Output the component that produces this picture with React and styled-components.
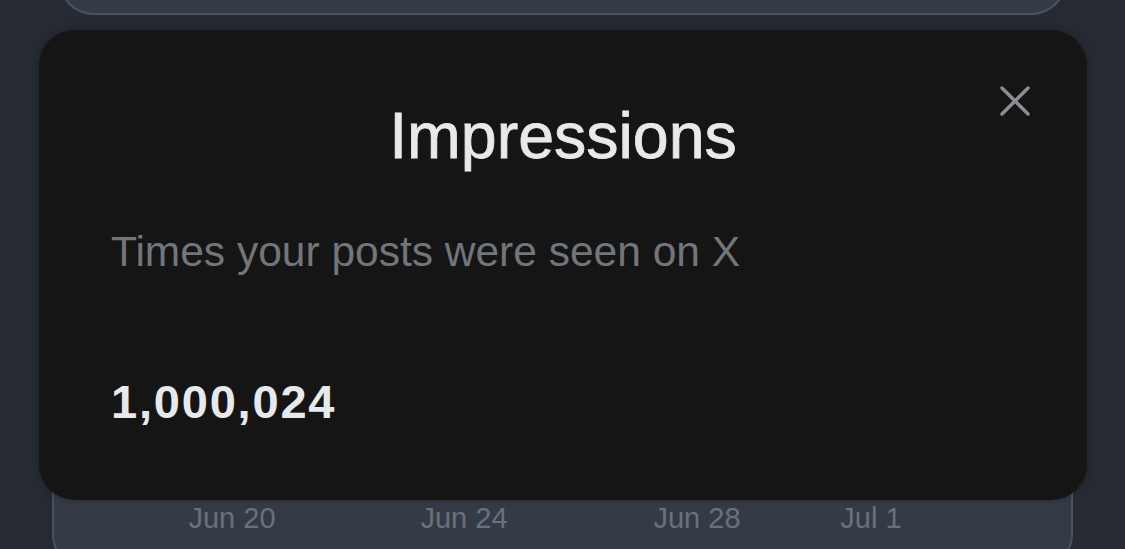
import styled, { createGlobalStyle } from 'styled-components'

const GlobalStyle = createGlobalStyle`
  html, body {
    margin: 0;
    padding: 0;
    background: #262b33;
    font-family: "Liberation Sans", Arial, sans-serif;
  }
`

const Screen = styled.div`
  position: relative;
  width: 1125px;
  height: 549px;
  overflow: hidden;
  background: #262b33;
  display: flex;
  flex-direction: column;
`

const Card = styled.div`
  margin: 0 ${p => p.$inset}px;
  background: #343b46;
  border: 2px solid #4a525e;
  border-radius: 36px;
  box-sizing: border-box;
  flex-shrink: 0;
`

const TopCard = styled(Card)`
  height: 80px;
  margin-top: -65px;
`

const ChartCard = styled(Card)`
  margin-top: 385px;
  height: 170px;
  padding-top: 100px;
`

const Axis = styled.div`
  position: relative;
  height: 40px;
`

const Tick = styled.span`
  position: absolute;
  top: 0;
  transform: translateX(-50%);
  font-size: 29px;
  color: #69717c;
  white-space: nowrap;
`

const Modal = styled.div`
  position: absolute;
  top: 30px;
  left: 39px;
  width: 1048px;
  height: 470px;
  box-sizing: border-box;
  background: #151515;
  border-radius: 36px;
  box-shadow: 0 0 6px rgba(0, 0, 0, 0.35);
  padding: 74px 72px 0;
  display: flex;
  flex-direction: column;
`

const Title = styled.h2`
  margin: 0;
  text-align: center;
  font-size: 64.5px;
  font-weight: 400;
  line-height: 1;
  color: #e7e9ea;
  -webkit-text-stroke: 0.8px #e7e9ea;
`

const Subtitle = styled.p`
  margin: 62px 0 0;
  font-size: 42.5px;
  line-height: 1;
  color: #71767b;
`

const Value = styled.div`
  margin-top: 105px;
  font-size: 47px;
  font-weight: 700;
  line-height: 1;
  letter-spacing: 1.8px;
  color: #e7e9ea;
`

const CloseButton = styled.button`
  position: absolute;
  top: 53px;
  right: 54px;
  width: 36px;
  height: 36px;
  padding: 0;
  border: 0;
  background: none;
  display: flex;
  align-items: center;
  justify-content: center;
`

const ticks = [
  { label: 'Jun 20', x: 178 },
  { label: 'Jun 24', x: 410 },
  { label: 'Jun 28', x: 643 },
  { label: 'Jul 1', x: 817 },
]

export default function App() {
  return (
    <Screen>
      <GlobalStyle />
      <TopCard $inset={58} />
      <ChartCard $inset={52}>
        <Axis>
          {ticks.map(t => (
            <Tick key={t.label} style={{ left: t.x }}>{t.label}</Tick>
          ))}
        </Axis>
      </ChartCard>

      <Modal>
        <CloseButton aria-label="Close">
          <svg width="32" height="32" viewBox="0 0 32 32">
            <path d="M3 3 L29 29 M29 3 L3 29" stroke="#8b8e92" strokeWidth="3.4" strokeLinecap="round" fill="none" />
          </svg>
        </CloseButton>
        <Title>Impressions</Title>
        <Subtitle>Times your posts were seen on X</Subtitle>
        <Value>1,000,024</Value>
      </Modal>
    </Screen>
  )
}
